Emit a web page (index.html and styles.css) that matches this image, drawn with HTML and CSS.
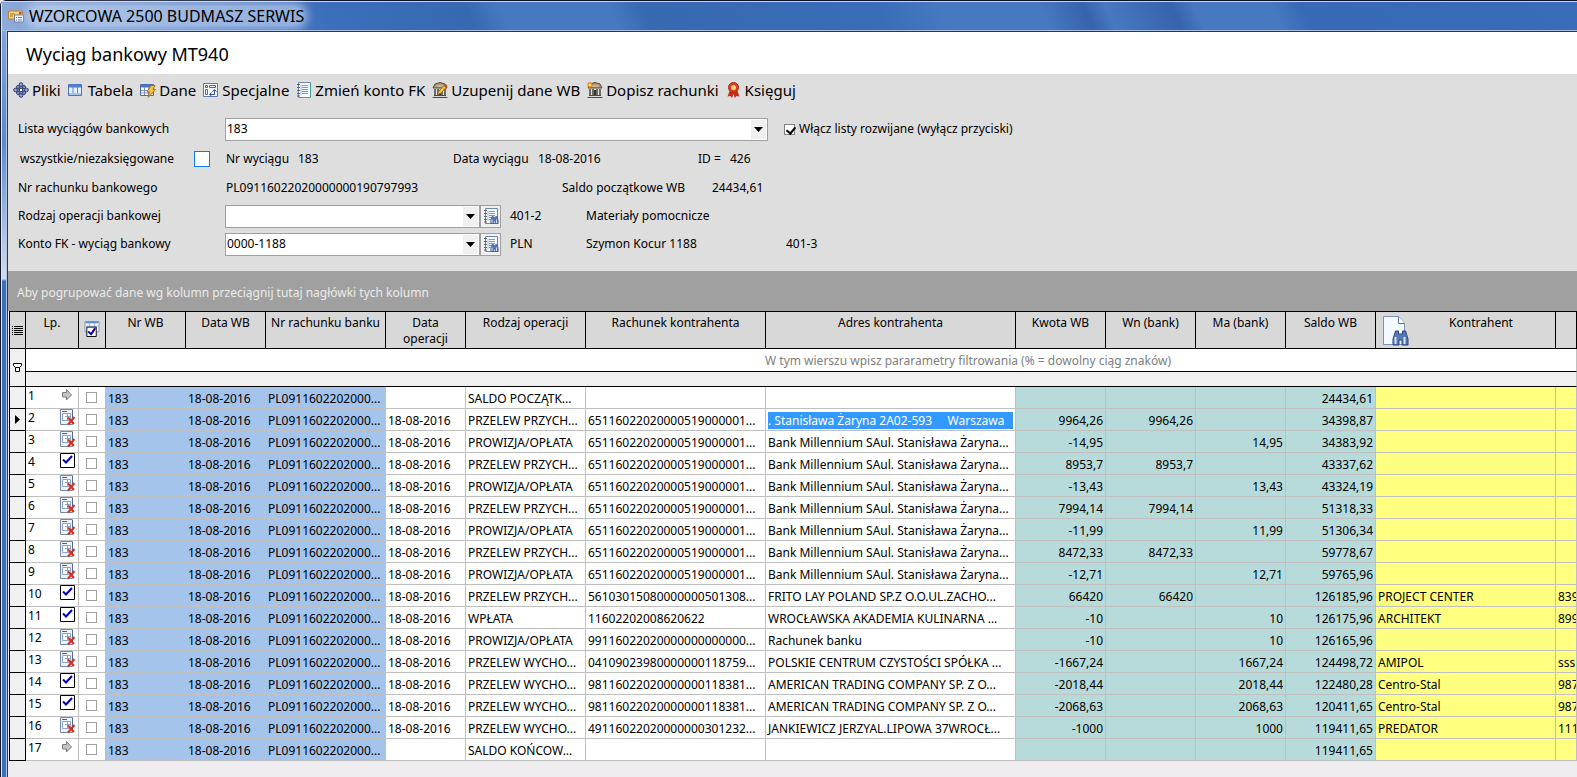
FILE: index.html
```html
<!DOCTYPE html>
<html lang="pl">
<head>
<meta charset="utf-8">
<title>WZORCOWA 2500 BUDMASZ SERWIS</title>
<link rel="stylesheet" href="styles.css">
</head>
<body>
<svg class="sprite" aria-hidden="true">
  <symbol id="i-doc-x" viewBox="0 0 16 17">
    <path d="M.5.5h12v15H.5z" fill="#eef3fc" stroke="#7088b0"/>
    <path d="M2 2.500h5" stroke="#3a5fc0"/>
    <path d="M2.500 4.500h8v7h-8zM7.500 4.500v7M5 7.500h5" fill="#fff" stroke="#8ea2c8"/>
    <path d="M12.500 1v14" stroke="#52688f"/>
    <path d="M8 8.500l6 6.500M14.500 8L8 15.500" stroke="#d8301c" stroke-width="2" fill="none"/>
  </symbol>
  <symbol id="i-ok" viewBox="0 0 16 17">
    <path d="M.5.5h14v14H.5z" fill="#fff" stroke="#000"/>
    <path d="M3 6.500L6 9.500 12 3" fill="none" stroke="#0000b4" stroke-width="2"/>
  </symbol>
  <symbol id="i-arrow" viewBox="0 0 16 17">
    <path d="M2.500 5.500h4v-3L11.500 8l-5 5v-3h-4z" fill="#c4c4c4" stroke="#808080"/>
  </symbol>
  <symbol id="i-book" viewBox="0 0 16 16">
    <path d="M2.500.5h12v15h-12z" fill="#f4f8ff" stroke="#6f86a8"/>
    <path d="M14.500 1v14" stroke="#3c9c8c"/>
    <path d="M6 3.500h6M6 5.500h6M6 7.500h6M6 9.500h6M6 11.500h6" stroke="#4cc84c"/>
    <path d="M5 3v10" stroke="#a8b8cc"/>
    <path d="M1 2.500h3M1 5.500h3M1 8.500h3M1 11.500h3M1 14h3" stroke="#56617a"/>
  </symbol>
  <symbol id="i-bino" viewBox="0 0 16 16">
    <path d="M3 1h3v3h4V1h3l2.500 8v6H9.500v-5h-3v5H.5V9z" fill="#5878b4" stroke="#2c4680"/>
    <path d="M3 7v7M12 7v7" stroke="#d4e2fa" stroke-width="2"/>
  </symbol>
  <symbol id="i-bank" viewBox="0 0 16 16">
    <path d="M1 6l2-4 5-1.500 5 1.500 2 4z" fill="#a89878" stroke="#5a4a34"/>
    <path d="M.5 15.500h15M2 13.500h12" stroke="#4d4a46"/>
    <path d="M3 7v6M6 7v6M10 7v6M13 7v6" stroke="#6e6a64" stroke-width="2"/>
    <path d="M7 8h2v5H7z" fill="#3a302a"/>
    <path d="M4.500 4h7" stroke="#e4d8b8"/>
  </symbol>
</svg>

<div class="window">
  <header class="titlebar">
    <svg class="icon" viewBox="0 0 16 13" aria-hidden="true">
      <path d="M.5 1.500h14v8H.5z" fill="#f6d27c" stroke="#b88428"/>
      <path d="M2 4.500h5M2 6.500h3" stroke="#a87420"/>
      <path d="M11 2.500h2.500v2.500H11z" fill="#d23c1c"/>
      <path d="M6.500 5.500h9v7h-9z" fill="#f4f7fc" stroke="#71809c"/>
      <path d="M8 8h1M10 8h4M8 10.500h1M10 10.500h4" stroke="#5c78b0"/>
    </svg>
    <span class="window-title">WZORCOWA 2500 BUDMASZ SERWIS</span>
  </header>

  <main class="client">
    <h1 class="page-title">Wyciąg bankowy MT940</h1>

    <section class="panel">
      <nav class="toolbar">
        <button type="button" class="tool"><svg class="icon" viewBox="0 0 16 16" aria-hidden="true">
          <path d="M8 1v14M1 8h14M4 4l8 8M12 4l-8 8" stroke="#303c70"/>
          <g fill="#91a8e0" stroke="#303c70"><circle cx="8" cy="2.500" r="1.800"/><circle cx="8" cy="13.500" r="1.800"/><circle cx="2.500" cy="8" r="1.800"/><circle cx="13.500" cy="8" r="1.800"/><circle cx="5" cy="5" r="1.500"/><circle cx="11" cy="5" r="1.500"/><circle cx="5" cy="11" r="1.500"/><circle cx="11" cy="11" r="1.500"/><circle cx="8" cy="8" r="1.800" fill="#fff"/></g>
        </svg>Pliki</button>
        <button type="button" class="tool tool-wide"><svg class="icon" viewBox="0 0 16 16" aria-hidden="true">
          <path d="M.5 2.500h13v11H.5z" fill="#e4f0ff" stroke="#4c74b8"/>
          <path d="M1 4h12" stroke="#4c80d8" stroke-width="3"/>
          <path d="M5 3v10M9.500 3v10" stroke="#5c84c4"/>
          <path d="M1 12h12" stroke="#a8c4ec" stroke-width="2"/>
        </svg>Tabela</button>
        <button type="button" class="tool"><svg class="icon" viewBox="0 0 16 16" aria-hidden="true">
          <path d="M.5 2.500h13v11H.5z" fill="#fff" stroke="#5068a0"/>
          <path d="M1 4h12" stroke="#4474cc" stroke-width="3"/>
          <path d="M4.500 5v8M8.500 5v8M1 8.500h12M1 11h12" stroke="#7c90bc"/>
          <path d="M11 3.500h4l-2 4h2.500L8 15.500l1.500-5.500H7z" fill="#fbc438" stroke="#9c6410" stroke-width=".8"/>
        </svg>Dane</button>
        <button type="button" class="tool"><svg class="icon" viewBox="0 0 16 16" aria-hidden="true">
          <path d="M.5 1.500h14v13H.5z" fill="#f4f8ff" stroke="#6078a8"/>
          <path d="M2.500 3.500h2v2h-2zM6.500 3.500h6v2h-6zM2.500 7.500h2v5h-2z" fill="#fff" stroke="#586888"/>
          <path d="M7 12.500h4.500V8M9.500 9.500l2-2 2 2M8.500 10.500l-2 2 2 1.500" fill="none" stroke="#2c50a8"/>
        </svg>Specjalne</button>
        <button type="button" class="tool"><svg class="icon" aria-hidden="true"><use href="#i-book"/></svg>Zmień konto FK</button>
        <button type="button" class="tool"><svg class="icon" viewBox="0 0 16 16" aria-hidden="true"><use href="#i-bank"/>
          <path d="M5.500 12.500l1-3 5.500-6 2 2-5.500 6z" fill="#fcc42c" stroke="#8c5c10" stroke-width=".8"/>
          <path d="M12 3.500l1.500-1.500 2 2L14 5.500z" fill="#e43420"/>
        </svg>Uzupenij dane WB</button>
        <button type="button" class="tool"><svg class="icon" viewBox="0 0 16 16" aria-hidden="true"><use href="#i-bank"/>
          <path d="M3 0v6M0 3h6M1 1l4 4M5 1L1 5" stroke="#f06c18" stroke-width="1.200"/><circle cx="3" cy="3" r="1.500" fill="#fff04c"/>
        </svg>Dopisz rachunki</button>
        <button type="button" class="tool"><svg class="icon" viewBox="0 0 16 16" aria-hidden="true">
          <path d="M4 8L1.500 14.500l3-.5 1.500 2 1.500-4L9 16l1.500-2 3 .5L11 8z" fill="#c42a18"/>
          <circle cx="7.500" cy="5.500" r="5" fill="#dc3c20" stroke="#b42412"/>
          <circle cx="7.500" cy="5.500" r="2.500" fill="#fcd470"/>
        </svg>Księguj</button>
      </nav>

      <form class="form">
        <div class="form-row">
          <label class="caption" for="lista">Lista wyciągów bankowych</label>
          <span class="combo combo-long">
            <select id="lista"><option>183</option></select>
            <svg class="drop" viewBox="0 0 15 19" aria-hidden="true"><path d="M3 7h9l-4.500 5z"/></svg>
          </span>
          <label class="check-label"><input type="checkbox" class="check" checked>Włącz listy rozwijane (wyłącz przyciski)</label>
        </div>
        <div class="form-row form-row-tall">
          <label class="caption caption-inset" for="wszystkie">wszystkie/niezaksięgowane</label>
          <span class="toggle-slot"><input type="checkbox" class="toggle" id="wszystkie"></span>
          <span class="w-72">Nr wyciągu</span><span class="w-155">183</span>
          <span class="w-85">Data wyciągu</span><span class="w-160">18-08-2016</span>
          <span class="w-32">ID =</span><span>426</span>
        </div>
        <div class="form-row">
          <span class="caption">Nr rachunku bankowego</span>
          <span class="w-336">PL09116022020000000190797993</span>
          <span class="w-150">Saldo początkowe WB</span><span>24434,61</span>
        </div>
        <div class="form-row">
          <label class="caption" for="rodzaj">Rodzaj operacji bankowej</label>
          <span class="combo combo-short">
            <select id="rodzaj"><option></option></select>
            <svg class="drop" viewBox="0 0 15 19" aria-hidden="true"><path d="M3 7h9l-4.500 5z"/></svg>
          </span>
          <button type="button" class="lookup" aria-label="Wybierz rodzaj operacji"><svg class="icon" viewBox="0 0 16 16"><use href="#i-book"/><use href="#i-bino" x="7" y="8" width="9" height="8"/></svg></button>
          <span class="w-76">401-2</span><span>Materiały pomocnicze</span>
        </div>
        <div class="form-row">
          <label class="caption" for="konto">Konto FK - wyciąg bankowy</label>
          <span class="combo combo-short">
            <select id="konto"><option>0000-1188</option></select>
            <svg class="drop" viewBox="0 0 15 19" aria-hidden="true"><path d="M3 7h9l-4.500 5z"/></svg>
          </span>
          <button type="button" class="lookup" aria-label="Wybierz konto FK"><svg class="icon" viewBox="0 0 16 16"><use href="#i-book"/><use href="#i-bino" x="7" y="8" width="9" height="8"/></svg></button>
          <span class="w-76">PLN</span><span class="w-200">Szymon Kocur 1188</span><span>401-3</span>
        </div>
      </form>
    </section>

    <section class="grid-area">
      <p class="group-bar">Aby pogrupować dane wg kolumn przeciągnij tutaj nagłówki tych kolumn</p>
      <div class="grid-wrap">
        <table class="grid">
          <colgroup>
            <col class="c-sel"><col class="c-lp"><col class="c-chk"><col class="c-80"><col class="c-80"><col class="c-120"><col class="c-80"><col class="c-120"><col class="c-180"><col class="c-250"><col class="c-90"><col class="c-90"><col class="c-90"><col class="c-90"><col class="c-180"><col>
          </colgroup>
          <thead>
            <tr class="head">
              <th class="sel"><svg class="sel-icon" viewBox="0 0 11 11" aria-hidden="true"><path d="M0 1.500h1M0 3.500h1M0 5.500h1M0 7.500h1M0 9.500h1M2 1.500h9M2 3.500h9M2 5.500h9M2 7.500h9M2 9.500h9" stroke="#000" shape-rendering="crispEdges"/></svg></th>
              <th>Lp.</th>
              <th class="head-icon"><svg class="icon" viewBox="0 0 16 17" aria-hidden="true">
                <path d="M.5.5h15v11H.5z" fill="#fff" stroke="#7c9cd0"/><path d="M1 1.500h14" stroke="#5c8cdc" stroke-width="2"/><path d="M5.500 2v9M10.500 2v9M1 5.500h14" stroke="#94acd8"/>
                <path d="M2.500 6.500h10v10h-10z" fill="#fff" stroke="#000"/><path d="M8 13l4-6" stroke="#e02020" stroke-width="2"/><path d="M4 11l3 3 4-6" fill="none" stroke="#0000b4" stroke-width="2"/>
              </svg></th>
              <th>Nr WB</th><th>Data WB</th><th>Nr rachunku banku</th><th>Data<br>operacji</th><th>Rodzaj operacji</th><th>Rachunek kontrahenta</th><th>Adres kontrahenta</th><th>Kwota WB</th><th>Wn (bank)</th><th>Ma (bank)</th><th>Saldo WB</th>
              <th><div class="head-pair"><svg class="page-icon" viewBox="0 0 26 30" aria-hidden="true">
                <path d="M.5.5h15l6 7v21H.5z" fill="#f4f8ff" stroke="#7c90b4"/><path d="M15.500.5v7h6" fill="#fff" stroke="#5870a0"/>
                <use href="#i-bino" x="9" y="14" width="17" height="16"/>
              </svg><span>Kontrahent</span></div></th>
              <th></th>
            </tr>
            <tr class="filter">
              <td class="sel" rowspan="2"><svg class="sel-icon" viewBox="0 0 11 11" aria-hidden="true"><path d="M1.500 1.500h8v2l-2 2v4h-4v-4l-2-2zM3.500 5.500h4" fill="#fff" stroke="#000"/></svg></td>
              <td colspan="15"><input class="filter-input" aria-label="Filtr" placeholder="W tym wierszu wpisz pararametry filtrowania (% = dowolny ciąg znaków)"></td>
            </tr>
            <tr class="spacer"><td colspan="15"></td></tr>
          </thead>
          <tbody id="rows"></tbody>
        </table>
      </div>
    </section>
  </main>
</div>
<script src="grid.js"></script>
</body>
</html>
```
FILE: grid.js
```js
const D = "18-08-2016";
const MILL = "65116022020000519000001...";
const BANK = "Bank Millennium SAul. Stanisława Żaryna...";
const IN = "PRZELEW PRZYCH...";
const OUT = "PRZELEW WYCHO...";
const FEE = "PROWIZJA/OPŁATA";

// status, date, operation, account, address, amount, debit, credit, balance, contractor, code
const records = [
  ["arrow", "", "SALDO POCZĄTK...", "", "", "", "", "", "24434,61", "", ""],
  ["doc-x", D, IN, MILL, ". Stanisława Żaryna 2A02-593     Warszawa", "9964,26", "9964,26", "", "34398,87", "", ""],
  ["doc-x", D, FEE, MILL, BANK, "-14,95", "", "14,95", "34383,92", "", ""],
  ["ok", D, IN, MILL, BANK, "8953,7", "8953,7", "", "43337,62", "", ""],
  ["doc-x", D, FEE, MILL, BANK, "-13,43", "", "13,43", "43324,19", "", ""],
  ["doc-x", D, IN, MILL, BANK, "7994,14", "7994,14", "", "51318,33", "", ""],
  ["doc-x", D, FEE, MILL, BANK, "-11,99", "", "11,99", "51306,34", "", ""],
  ["doc-x", D, IN, MILL, BANK, "8472,33", "8472,33", "", "59778,67", "", ""],
  ["doc-x", D, FEE, MILL, BANK, "-12,71", "", "12,71", "59765,96", "", ""],
  ["ok", D, IN, "56103015080000000501308...", "FRITO LAY POLAND SP.Z O.O.UL.ZACHO...", "66420", "66420", "", "126185,96", "PROJECT CENTER", "839"],
  ["ok", D, "WPŁATA", "11602202008620622", "WROCŁAWSKA AKADEMIA KULINARNA ...", "-10", "", "10", "126175,96", "ARCHITEKT", "899"],
  ["doc-x", D, FEE, "99116022020000000000000...", "Rachunek banku", "-10", "", "10", "126165,96", "", ""],
  ["doc-x", D, OUT, "04109023980000000118759...", "POLSKIE CENTRUM CZYSTOŚCI SPÓŁKA ...", "-1667,24", "", "1667,24", "124498,72", "AMIPOL", "sss"],
  ["ok", D, OUT, "98116022020000000118381...", "AMERICAN TRADING COMPANY SP. Z O...", "-2018,44", "", "2018,44", "122480,28", "Centro-Stal", "987"],
  ["ok", D, OUT, "98116022020000000118381...", "AMERICAN TRADING COMPANY SP. Z O...", "-2068,63", "", "2068,63", "120411,65", "Centro-Stal", "987"],
  ["doc-x", D, OUT, "49116022020000000301232...", "JANKIEWICZ JERZYAL.LIPOWA 37WROCŁ...", "-1000", "", "1000", "119411,65", "PREDATOR", "111"],
  ["arrow", "", "SALDO KOŃCOW...", "", "", "", "", "", "119411,65", "", ""]
];
const active = 1;

document.getElementById("rows").innerHTML = records.map((r, i) => {
  const marker = i === active
    ? '<svg class="marker" viewBox="0 0 5 9"><path d="M0 0l5 4.500L0 9z"/></svg>' : "";
  const address = i === active
    ? `<input class="edit" aria-label="Adres kontrahenta" value="${r[4]}">` : r[4];
  return `<tr><td class="sel">${marker}</td>
    <td class="lp"><div class="lp-box"><span>${i + 1}</span><svg class="icon status"><use href="#i-${r[0]}"/></svg></div></td>
    <td class="mark"><input type="checkbox" class="row-check" aria-label="Zaznacz ${i + 1}"></td>
    <td class="blue">183</td><td class="blue">${D}</td><td class="blue">PL0911602202000...</td>
    <td>${r[1]}</td><td>${r[2]}</td><td>${r[3]}</td><td>${address}</td>
    ${r.slice(5, 9).map(v => `<td class="teal">${v}</td>`).join("")}
    <td class="yellow">${r[9]}</td><td class="yellow">${r[10]}</td></tr>`;
}).join("");
```
FILE: styles.css
```css
* { box-sizing: border-box; }

body {
  margin: 0;
  font: 12px/16px "Noto Sans", "Open Sans", sans-serif;
  color: #000;
  background: #efedf0;
  overflow: hidden;
}

button, input, select { font: inherit; color: inherit; margin: 0; padding: 0; border: 0; background: none; }
.sprite { display: none; }
.icon { width: 16px; height: 16px; flex: none; display: block; }

/* window frame */
.window {
  min-height: 100vh;
  display: flex;
  flex-direction: column;
  padding-left: 7px;
  border-top: 1px solid #0c1024;
  border-top-left-radius: 6px;
  background: linear-gradient(90deg, #10182c 1px, #dce6f6 1px 2px, transparent 2px 6px, #b4c8e8 6px 7px, transparent 7px),
    linear-gradient(#8fabda, #5e88c8 140px, #c4d2ea 260px, #d0daee 278px, #3c6cba 280px);
}
.titlebar {
  height: 30px;
  margin-left: -5px;
  padding-left: 6px;
  display: flex;
  align-items: center;
  gap: 5px;
  border-top: 1px solid #c8d8f0;
  border-bottom: 1px solid #a8c0e4;
  background: linear-gradient(65deg, #8fabda, #3c6ebc 300px, #3868b0 430px, #4878c0 460px 560px, #3868b0 590px, #3a6cb8 800px, #4878c0 860px 950px, #3564ac 990px, #4878c0 1010px, #3564ac 1070px, #4878c0 1090px 1160px, #3868b6 1190px, #3a6cba);
}
.window-title {
  font-size: 16px;
  line-height: 20px;
  border-radius: 10px;
  background: rgba(210, 224, 246, .55);
  box-shadow: 0 0 8px 4px rgba(210, 224, 246, .55);
}
.client {
  flex: 1;
  display: flex;
  flex-direction: column;
  border-top: 1px solid #203860;
  border-left: 1px solid #203860;
  background: #efedf0;
}
.page-title {
  margin: 0;
  padding: 10px 18px 8px;
  font-size: 18px;
  line-height: 24px;
  font-weight: 400;
  background: #fff;
}

/* menu and form */
.panel { background: #dedede; padding-bottom: 13px; }
.toolbar { display: flex; gap: 7px; padding: 4px 5px 0; height: 41px; align-items: flex-start; }
.tool { display: flex; align-items: center; gap: 3px; font-size: 15px; line-height: 24px; white-space: nowrap; }
.tool-wide { gap: 4px; }
.form-row { display: flex; align-items: center; height: 28px; padding-left: 10px; white-space: nowrap; }
.form-row-tall { height: 31px; }
.caption { width: 207px; flex: none; }
.caption-inset { width: 176px; padding-left: 2px; }
.toggle-slot { width: 32px; }
.toggle { appearance: none; display: block; width: 16px; height: 16px; background: #fff; border: 1px solid #0a7cf0; }
.form-row > span { flex: none; }
.w-32 { width: 32px; }
.w-72 { width: 72px; }
.w-76 { width: 76px; }
.w-85 { width: 85px; }
.w-150 { width: 150px; }
.w-155 { width: 155px; }
.w-160 { width: 160px; }
.w-200 { width: 200px; }
.form-row > .w-336 { width: 336px; margin-left: 1px; }
.combo { display: flex; height: 23px; background: #fff; border: 1px solid #a0a0a0; padding: 1px; }
.combo-long { width: 543px; margin-right: 16px; }
.combo-short { width: 255px; }
.combo select { flex: 1; appearance: none; outline: 0; }
.drop { width: 15px; height: 19px; background: #f0f0f0; flex: none; }
.lookup { height: 23px; width: 21px; padding: 2px; background: #f0f0f0; border: 1px solid #a0a0a0; margin-right: 9px; }
.check-label { display: flex; align-items: center; gap: 4px; }
.check { width: 11px; height: 11px; appearance: none; background: #fff; border: 1px solid #808080; position: relative; }
.check:checked::after {
  content: "";
  position: absolute;
  left: 3px;
  top: 0;
  width: 4px;
  height: 7px;
  border: solid #000;
  border-width: 0 2px 2px 0;
  transform: rotate(40deg);
}

/* data grid */
.group-bar { margin: 0; padding: 14px 8px 10px 9px; background: #a0a0a0; color: #ebebeb; }
.grid-wrap { padding-left: 1px; overflow: hidden; }
.grid {
  width: 100%;
  table-layout: fixed;
  border-spacing: 0;
  border-top: 1px solid #000;
  border-left: 1px solid #000;
}
.c-sel { width: 16px; }
.c-lp { width: 53px; }
.c-chk { width: 27px; }
.c-80 { width: 80px; }
.c-90 { width: 90px; }
.c-120 { width: 120px; }
.c-180 { width: 180px; }
.c-250 { width: 250px; }
.grid td {
  height: 22px;
  padding: 2px 2px 0;
  line-height: 18px;
  background: #fff;
  border-right: 1px solid #c0c0c0;
  border-bottom: 1px solid #c0c0c0;
  white-space: nowrap;
  overflow: hidden;
}
.grid th {
  height: 37px;
  padding: 3px 2px 0;
  font-weight: 400;
  line-height: 16px;
  vertical-align: top;
  background: #d8d8d8;
  border-right: 1px solid #000;
  border-bottom: 1px solid #000;
}
.grid .sel { background: #f0f0f0; padding: 0 2px; border-right: 1px solid #000; border-bottom: 1px solid #000; vertical-align: middle; }
.grid th.sel { background: #d8d8d8; }
.sel-icon { display: block; width: 11px; height: 11px; }
.marker { display: block; width: 5px; height: 9px; margin-left: 3px; }
.grid .head-icon { padding: 9px 5px 0; }
.head-pair { display: flex; }
.head-pair span { flex: 1; }
.page-icon { width: 26px; height: 30px; margin: 1px 0 0 5px; flex: none; }
.grid .filter td { height: 23px; padding: 0; border-bottom: 1px solid #000; }
.grid .filter .sel { padding: 0 2px; }
.grid .spacer td { height: 15px; padding: 0; background: #f0f0f0; border-bottom: 1px solid #000; }
.filter-input { display: block; width: 100%; height: 22px; padding-left: 334px; text-align: center; outline: 0; }
.filter-input::placeholder { color: #808080; opacity: 1; }
.grid .lp { padding: 0 2px; }
.lp-box { display: flex; justify-content: space-between; height: 21px; }
.status { height: 17px; }
.grid .mark { padding: 0 7px; }
.row-check { display: block; appearance: none; width: 11px; height: 11px; border: 1px solid #a0a0a0; background: #fff; }
.grid .blue { background: #a4c4ec; }
.grid .teal { background: #b7dbda; text-align: right; }
.grid .yellow { background: #ffff80; }
.edit { display: block; width: 100%; height: 17px; background: #39f; color: #fff; outline: 0; }
```
